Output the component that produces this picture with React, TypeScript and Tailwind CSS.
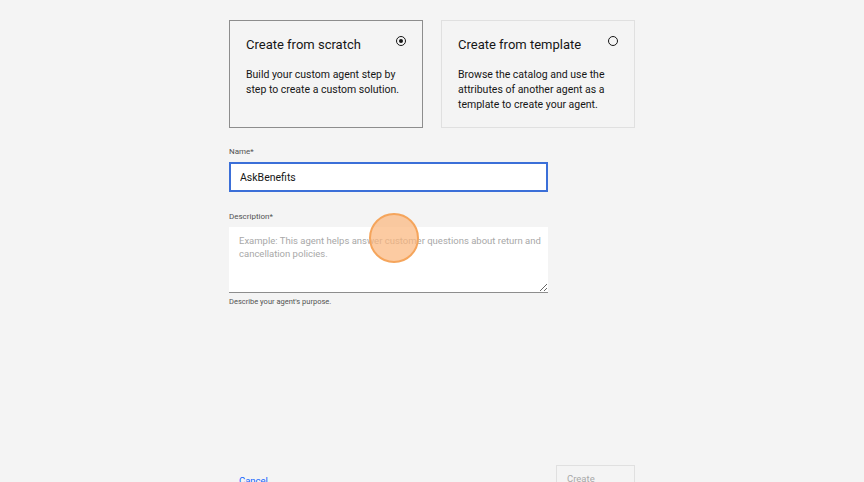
import React, { useState } from "react";

const font = { fontFamily: 'Roboto, "Noto Sans", sans-serif' };

function Radio({ checked }: { checked: boolean }) {
  return (
    <span className="flex h-[10px] w-[10px] items-center justify-center rounded-full border border-[#161616]">
      {checked && <span className="h-[4px] w-[4px] rounded-full bg-[#161616]" />}
    </span>
  );
}

function OptionCard({
  title,
  text,
  selected,
  onClick,
}: {
  title: string;
  text: string;
  selected: boolean;
  onClick: () => void;
}) {
  return (
    <button
      onClick={onClick}
      className={`flex h-[108px] w-[194px] flex-col border bg-[#f4f4f4] pl-[16px] pr-[12px] pt-[15px] text-left ${
        selected ? "border-[#8d8d8d]" : "border-[#e0e0e0]"
      }`}
    >
      <div className="flex w-full items-start justify-between">
        <span className="text-[13px] leading-[18px] text-[#161616]">{title}</span>
        <span className="mr-[4px]">
          <Radio checked={selected} />
        </span>
      </div>
      <p className="mt-[13px] text-[10.5px] leading-[15px] text-[#161616]">{text}</p>
    </button>
  );
}

export default function App() {
  const [mode, setMode] = useState("scratch");
  const [name, setName] = useState("AskBenefits");
  const [desc, setDesc] = useState("");

  return (
    <div className="relative h-[482px] w-full overflow-hidden bg-[#f4f4f4]" style={font}>
      <div className="mx-auto w-[406px] pt-[20px]">
        <div className="flex gap-[18px]">
          <OptionCard
            title="Create from scratch"
            text="Build your custom agent step by step to create a custom solution."
            selected={mode === "scratch"}
            onClick={() => setMode("scratch")}
          />
          <OptionCard
            title="Create from template"
            text="Browse the catalog and use the attributes of another agent as a template to create your agent."
            selected={mode === "template"}
            onClick={() => setMode("template")}
          />
        </div>

        <label className="mt-[18px] block text-[8px] leading-[12px] text-[#525252]">Name*</label>
        <input
          value={name}
          onChange={(e) => setName(e.target.value)}
          className="mt-[4px] block h-[30px] w-[319px] border-2 border-[#3b6fd8] bg-white px-[9px] text-[10.5px] text-[#161616] outline-none"
        />

        <label className="mt-[19px] block text-[8px] leading-[12px] text-[#525252]">Description*</label>
        <textarea
          value={desc}
          onChange={(e) => setDesc(e.target.value)}
          placeholder="Example: This agent helps answer customer questions about return and cancellation policies."
          className="mt-[4px] block h-[66px] w-[319px] border-b border-[#8d8d8d] bg-white py-[7px] pl-[10px] pr-[2px] text-[9.5px] leading-[13px] text-[#161616] outline-none placeholder:text-[#a8a8a8]"
        />
        <p className="mt-[3px] text-[7.5px] leading-[12px] text-[#525252]">Describe your agent's purpose.</p>

        <div className="mt-[157px] flex items-start justify-between">
          <button className="mt-[9px] pl-[10px] text-[9.5px] text-[#0f62fe]">Cancel</button>
          <button className="h-[34px] w-[79px] border border-[#e0e0e0] pb-[6px] pl-[10px] text-left text-[9.5px] text-[#a8a8a8]">
            Create
          </button>
        </div>
      </div>

      {/* click highlight */}
      <div className="pointer-events-none absolute left-[369px] top-[213px] h-[50px] w-[50px] rounded-full border-2 border-[#f5a55c] bg-[#fbb57a]/70" />
    </div>
  );
}
